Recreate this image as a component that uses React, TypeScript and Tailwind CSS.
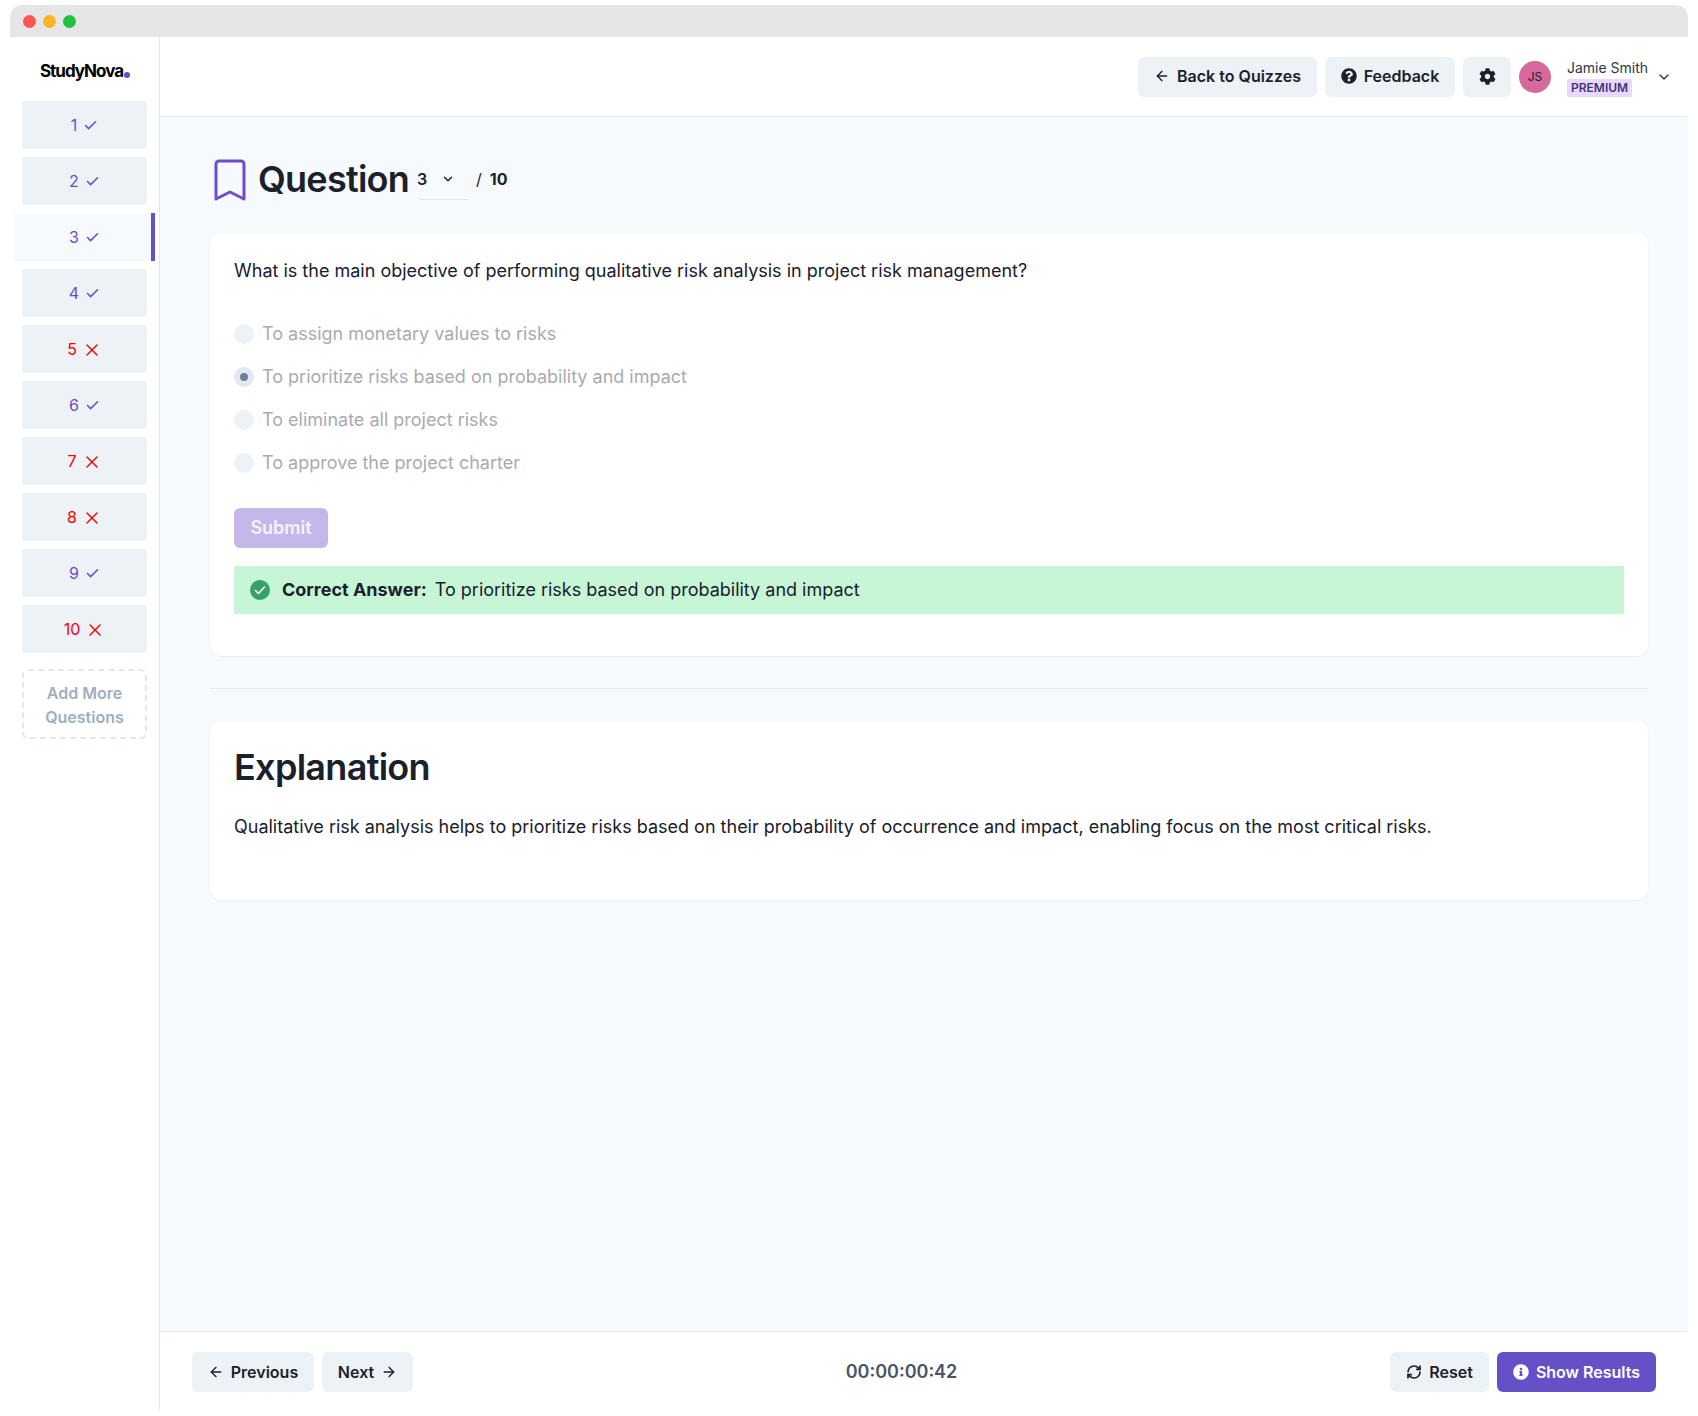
import React from "react";
import { ArrowLeft, ArrowRight, Check, ChevronDown, RefreshCw, X } from "lucide-react";
import { FaCog, FaInfoCircle, FaQuestionCircle } from "react-icons/fa";

const questions: { n: number; ok: boolean; active?: boolean }[] = [
  { n: 1, ok: true },
  { n: 2, ok: true },
  { n: 3, ok: true, active: true },
  { n: 4, ok: true },
  { n: 5, ok: false },
  { n: 6, ok: true },
  { n: 7, ok: false },
  { n: 8, ok: false },
  { n: 9, ok: true },
  { n: 10, ok: false },
];

const options = [
  { t: "To assign monetary values to risks" },
  { t: "To prioritize risks based on probability and impact", sel: true },
  { t: "To eliminate all project risks" },
  { t: "To approve the project charter" },
];

function Btn({ children, className = "" }: { children: React.ReactNode; className?: string }) {
  return (
    <div className={`flex h-10 items-center justify-center gap-[7px] rounded-md bg-[#edf2f7] pb-[1px] text-base font-semibold text-[#1a202c] ${className}`}>
      {children}
    </div>
  );
}

function SideItem({ n, ok, active }: { n: number; ok: boolean; active?: boolean }) {
  const color = ok ? "text-[#6550c8]" : "text-[#ff0000]";
  const inner = (
    <div className={`flex items-center justify-center text-base ${ok ? "gap-[6px]" : "gap-[5px]"} ${color}`}>
      <span>{n}</span>
      {ok ? <Check size={15} strokeWidth={2.5} className="mt-[1px]" /> : <X size={20} strokeWidth={1.7} className="mt-[1px]" />}
    </div>
  );
  if (active) {
    return (
      <div className="mx-[4px] flex h-12 items-center justify-center rounded-l-[3px] border-r-4 border-[#6550c8] bg-[#f7fafc] pl-[4px]">
        {inner}
      </div>
    );
  }
  return <div className="mx-3 flex h-12 items-center justify-center rounded-[3px] bg-[#edf2f7]">{inner}</div>;
}

export default function App() {
  return (
    <div className="h-[1416px] w-[1698px] overflow-hidden bg-white pl-[10px] pr-[10px] pt-[5px] font-['Inter',sans-serif] text-[#1a202c]">
      <div className="flex h-[1406px] w-[1678px] flex-col">
        <div className="flex h-[32px] shrink-0 items-center gap-[7px] rounded-t-xl bg-[#e6e6e6] pl-[13px]">
          <span className="h-[13px] w-[13px] rounded-full bg-[#ff5652]" />
          <span className="h-[13px] w-[13px] rounded-full bg-[#ffb428]" />
          <span className="h-[13px] w-[13px] rounded-full bg-[#1fc33c]" />
        </div>
        <div className="flex min-h-0 flex-1">
          <aside className="flex w-[150px] shrink-0 flex-col border-r border-[#e2e8f0] bg-white">
            <div className="flex h-[64px] items-center justify-center pl-[1px] pt-[5px]">
              <span className="text-[17px] font-bold tracking-[-1px] text-black">StudyNova</span>
              <span className="ml-[1px] mt-[6px] h-[6px] w-[6px] rounded-full bg-[#6550c8]" />
            </div>
            <div className="flex flex-col gap-2">
              {questions.map((q) => (
                <SideItem key={q.n} n={q.n} ok={q.ok} active={q.active} />
              ))}
            </div>
            <div className="mx-3 mt-4 flex h-[70px] items-center justify-center rounded-md border-2 border-dashed border-[#e2e8f0] pt-[1px] text-center text-base font-semibold leading-[24px] text-[#a0aec0]">
              Add More
              <br />
              Questions
            </div>
          </aside>
          <div className="flex min-w-0 flex-1 flex-col">
            <header className="flex h-[80px] shrink-0 items-center justify-end border-b border-[#e2e8f0] bg-white pr-[16px]">
              <Btn className="w-[179px]">
                <ArrowLeft size={16} strokeWidth={2} />
                Back to Quizzes
              </Btn>
              <Btn className="ml-2 w-[130px]">
                <FaQuestionCircle size={16} />
                Feedback
              </Btn>
              <Btn className="ml-2 w-[48px]">
                <FaCog size={17} />
              </Btn>
              <div className="ml-2 flex h-8 w-8 items-center justify-center rounded-full bg-[#d5689d] text-xs text-[#1a202c]">JS</div>
              <div className="ml-4 flex w-[82px] flex-col items-start gap-[1px] pt-[2px]">
                <span className="text-sm leading-[20px] text-[#2d3748]">Jamie Smith</span>
                <span className="rounded-[2px] bg-[#e9d8fd] px-1 text-xs font-semibold leading-[18px] text-[#44337a]">PREMIUM</span>
              </div>
              <ChevronDown size={16} className="ml-[7px] text-[#2d3748]" />
            </header>
            <main className="min-h-0 flex-1 bg-[#f7fafc] pl-[50px] pr-[40px] pt-[41px]">
              <div className="flex h-[43px] items-center">
                <svg width="34" height="42" viewBox="0 0 34 42" fill="none" stroke="#6f4ccb" strokeWidth="3" strokeLinejoin="round" className="ml-[3px]">
                  <path d="M3 5a3 3 0 0 1 3-3h22a3 3 0 0 1 3 3v35l-14-7-14 7z" />
                </svg>
                <h1 className="ml-[11px] text-4xl font-semibold leading-[43px] tracking-[-0.75px]">Question</h1>
                <div className="ml-[10px] flex h-[41px] w-[49px] items-center justify-between border-b border-[#e2e8f0] pr-[13px] text-base font-semibold">
                  <span className="-ml-[2px]">3</span>
                  <ChevronDown size={14} strokeWidth={2.5} />
                </div>
                <span className="ml-2 pb-[2px] text-base">/</span>
                <span className="ml-2 pb-[2px] text-base font-bold">10</span>
              </div>
              <section className="mt-[32px] h-[423px] rounded-xl bg-white px-6 pt-6 shadow-[0_1px_2px_rgba(0,0,0,0.05)]">
                <p className="text-lg leading-[28px]">
                  What is the main objective of performing qualitative risk analysis in project risk management?
                </p>
                <div className="mt-[27px] flex flex-col">
                  {options.map((o) => (
                    <div key={o.t} className="flex h-[43px] items-center gap-2">
                      <span className={`flex h-5 w-5 items-center justify-center rounded-full ${o.sel ? "bg-[#e2e8f0]" : "bg-[#edf2f7]"}`}>
                        {o.sel ? <span className="h-2 w-2 rounded-full bg-[#718096]" /> : null}
                      </span>
                      <span className="text-lg text-[#a9abb0]">{o.t}</span>
                    </div>
                  ))}
                </div>
                <div className="mt-[24px] flex h-10 w-[94px] items-center justify-center rounded-md bg-[#c3b8e9] text-lg font-semibold text-[#f5f3fc]">
                  Submit
                </div>
                <div className="mt-[18px] flex h-12 items-center bg-[#c6f6d5] pl-4 text-lg">
                  <svg width="20" height="20" viewBox="0 0 20 20">
                    <circle cx="10" cy="10" r="10" fill="#38a169" />
                    <path d="M5.5 10.5l3 3 6-6.5" fill="none" stroke="#fff" strokeWidth="1.5" strokeLinecap="round" strokeLinejoin="round" />
                  </svg>
                  <span className="ml-3 font-bold">Correct Answer:</span>
                  <span className="ml-2">To prioritize risks based on probability and impact</span>
                </div>
              </section>
              <div className="mt-8 h-px bg-[#e8edf3]" />
              <section className="mt-8 h-[179px] rounded-xl bg-white px-6 pt-[25px] shadow-[0_1px_2px_rgba(0,0,0,0.05)]">
                <h2 className="text-4xl font-semibold leading-[43px] tracking-[-0.7px]">Explanation</h2>
                <p className="mt-[24px] text-lg leading-[28px]">
                  Qualitative risk analysis helps to prioritize risks based on their probability of occurrence and impact, enabling focus on the most critical risks.
                </p>
              </section>
            </main>
            <footer className="flex h-[80px] shrink-0 items-center justify-between border-t border-[#e2e8f0] bg-white pl-8 pr-8 pt-[1px]">
              <div className="flex gap-2">
                <Btn className="w-[122px]">
                  <ArrowLeft size={16} strokeWidth={2} />
                  Previous
                </Btn>
                <Btn className="w-[91px]">
                  Next
                  <ArrowRight size={16} strokeWidth={2} />
                </Btn>
              </div>
              <span className="text-lg font-semibold text-[#4a5568]">00:00:00:42</span>
              <div className="flex gap-2">
                <Btn className="w-[99px]">
                  <RefreshCw size={16} strokeWidth={2.5} />
                  Reset
                </Btn>
                <Btn className="w-[159px] !bg-[#6550c8] !text-white">
                  <FaInfoCircle size={16} />
                  Show Results
                </Btn>
              </div>
            </footer>
          </div>
        </div>
      </div>
    </div>
  );
}
